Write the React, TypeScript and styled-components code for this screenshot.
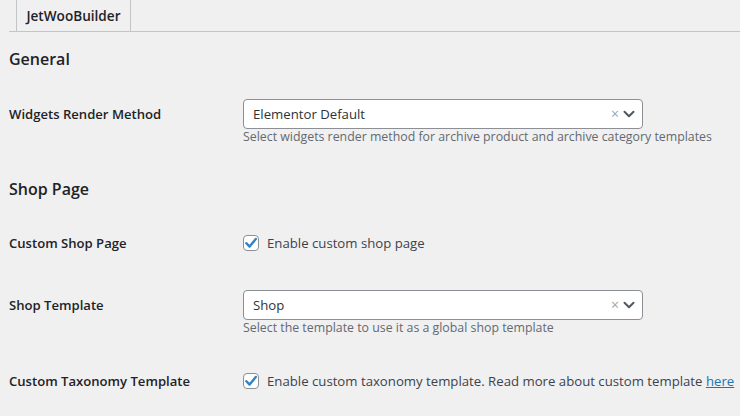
import styled, { createGlobalStyle } from 'styled-components';

const GlobalStyle = createGlobalStyle`
  html, body {
    margin: 0;
    padding: 0;
    background: #f0f0f1;
    font-family: "Open Sans", "Noto Sans", sans-serif;
    color: #3c434a;
    overflow: hidden;
  }
`;

const ChevronIcon = () => (
  <svg width="14" height="14" viewBox="0 0 14 14" fill="none">
    <path d="M2.5 4.8 L7 9.2 L11.5 4.8" stroke="#50575e" strokeWidth="2" strokeLinecap="round" strokeLinejoin="round" />
  </svg>
);

const CheckIcon = () => (
  <svg width="14" height="14" viewBox="0 0 14 14" fill="none">
    <path d="M2.4 7.2 L5.6 10.6 L11.8 3" stroke="#3582c4" strokeWidth="2.4" strokeLinecap="round" strokeLinejoin="round" />
  </svg>
);

const Select = ({ value }: { value: string }) => (
  <SelectBox>
    <SelectValue>{value}</SelectValue>
    <ClearMark>×</ClearMark>
    <ChevronIcon />
  </SelectBox>
);

const Checkbox = () => (
  <CheckBox>
    <CheckIcon />
  </CheckBox>
);

export default function App() {
  return (
    <>
      <GlobalStyle />
      <Page>
        <TabBar>
          <Tab>JetWooBuilder</Tab>
        </TabBar>

        <Heading $top={16}>General</Heading>
        <Row $top={29}>
          <Label $lh={30}>Widgets Render Method</Label>
          <Field>
            <Select value="Elementor Default" />
            <Description>Select widgets render method for archive product and archive category templates</Description>
          </Field>
        </Row>

        <Heading $top={33}>Shop Page</Heading>
        <Row $top={33}>
          <Label $lh={20}>Custom Shop Page</Label>
          <CheckRow>
            <Checkbox />
            <span>Enable custom shop page</span>
          </CheckRow>
        </Row>

        <Row $top={37}>
          <Label $lh={30}>Shop Template</Label>
          <Field>
            <Select value="Shop" />
            <Description>Select the template to use it as a global shop template</Description>
          </Field>
        </Row>

        <Row $top={35}>
          <Label $lh={20}>Custom Taxonomy Template</Label>
          <CheckRow>
            <Checkbox />
            <span>
              Enable custom taxonomy template. Read more about custom template <Link href="#">here</Link>
            </span>
          </CheckRow>
        </Row>
      </Page>
    </>
  );
}

const Page = styled.div`
  padding-left: 9px;
  width: 731px;
`;

const TabBar = styled.div`
  display: flex;
  height: 32px;
  padding-left: 7px;
  border-bottom: 1px solid #c3c4c7;
  box-sizing: border-box;
`;

const Tab = styled.div`
  height: 32px;
  margin-top: -1px;
  width: 115px;
  box-sizing: border-box;
  border: 1px solid #c3c4c7;
  border-bottom: none;
  background: #f0f0f1;
  display: flex;
  align-items: center;
  justify-content: center;
  font-size: 13.6px;
  font-weight: 600;
  color: #1d2327;
`;

const Heading = styled.h2<{ $top: number }>`
  margin: ${p => p.$top}px 0 0;
  font-size: 16px;
  line-height: 22px;
  font-weight: 600;
  color: #1d2327;
`;

const Row = styled.div<{ $top: number }>`
  display: grid;
  grid-template-columns: 234px 1fr;
  align-items: start;
  padding-top: ${p => p.$top}px;
`;

const Label = styled.div<{ $lh: number }>`
  font-size: 13.1px;
  font-weight: 600;
  color: #1d2327;
  line-height: ${p => p.$lh}px;
`;

const Field = styled.div`
  display: flex;
  flex-direction: column;
`;

const SelectBox = styled.div`
  width: 400px;
  height: 30px;
  box-sizing: border-box;
  display: flex;
  align-items: center;
  padding: 0 6px 0 9px;
  background: #fff;
  border: 1px solid #8c8f94;
  border-radius: 4px;
`;

const SelectValue = styled.span`
  flex: 1;
  font-size: 13.2px;
  color: #2c3338;
`;

const ClearMark = styled.span`
  font-size: 14px;
  color: #a0a5aa;
  margin-right: 3px;
  line-height: 1;
`;

const Description = styled.p`
  margin: 0;
  font-size: 12.35px;
  line-height: 16px;
  color: #646970;
`;

const CheckRow = styled.div`
  display: flex;
  align-items: center;
  gap: 8px;
  font-size: 13.2px;
  line-height: 20px;
  color: #3c434a;
  white-space: nowrap;
`;

const CheckBox = styled.span`
  width: 16px;
  height: 16px;
  box-sizing: border-box;
  flex-shrink: 0;
  display: flex;
  align-items: center;
  justify-content: center;
  background: #fff;
  border: 1px solid #8c8f94;
  border-radius: 4px;
`;

const Link = styled.a`
  color: #2271b1;
  text-decoration: underline;
`;
